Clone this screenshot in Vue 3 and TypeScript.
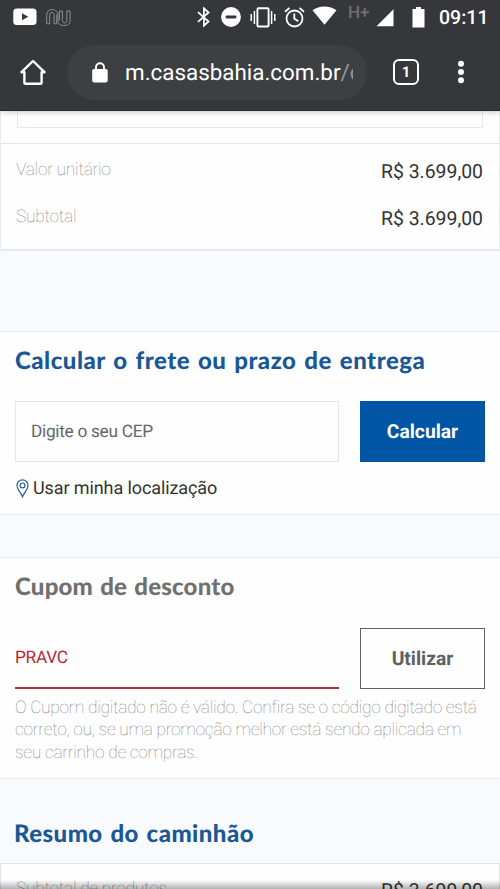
<script setup lang="ts">
interface PriceRow {
  label: string
  value: string
}

const itemRows: PriceRow[] = [
  { label: 'Valor unitário', value: 'R$ 3.699,00' },
  { label: 'Subtotal', value: 'R$ 3.699,00' },
]
const couponCode = 'PRAVC'
</script>

<template>
  <div class="screen">
    <header class="chrome">
      <div class="status">
        <svg class="i-youtube" width="24" height="18" viewBox="0 0 24 18"><rect x=".3" y=".5" width="23.2" height="16.5" rx="3.5" fill="#fff" /><path d="M9 5.2v7L15.3 8.7z" fill="#36373b" /></svg>
        <svg class="i-nu" width="25" height="17" viewBox="0 0 25 17" fill="none" stroke="#a2a3a6" stroke-width=".8"><path d="M.7 14.8V6.2C.7 2.5 2.8.6 6 .6c3.8 0 6 2 6 5.6v5.3c0 3.2 1.8 5 5.5 5 4.6 0 6.6-1.6 6.6-5.5V2h-3.3v9.3c0 1.7-.8 2.5-2.2 2.5s-2.2-.8-2.2-2.5V2h-3v9.3M.7 14.8h3V5.8c0-1.5.8-2.3 2.2-2.3s2.2.8 2.2 2.3v9h2.6V5.5" /></svg>
        <svg class="i-bt" width="14" height="20" viewBox="0 0 14 20" fill="none" stroke="#fff" stroke-width="1.8"><path d="M1 5.2l10.5 9.3-4.6 4.2V1.3l4.6 4.2L1 14.8" /></svg>
        <svg class="i-dnd" width="20" height="20" viewBox="0 0 20 20"><circle cx="10" cy="10" r="9.9" fill="#fff" /><rect x="4.7" y="8.5" width="10.6" height="3" rx=".8" fill="#36373b" /></svg>
        <svg class="i-vib" width="26" height="21" viewBox="0 0 26 21" fill="none" stroke="#fff"><rect x="7.4" y="1.3" width="11.2" height="18.2" rx="1" stroke-width="1.9" /><path d="M4.4 4v13M21.6 4v13M1.2 7v7M24.8 7v7" stroke-width="1.5" /></svg>
        <svg class="i-alarm" width="21" height="21" viewBox="0 0 21 21" fill="none" stroke="#fff" stroke-width="1.8"><circle cx="10.5" cy="11.5" r="8" /><path d="M1 4.7L5.4 1M20 4.7L15.6 1M10.3 6.5v5.3l4 2.5" /></svg>
        <svg class="i-wifi" width="25" height="19" viewBox="0 0 25 19"><path d="M.5 4.2C7-.9 18-.9 24.5 4.2L12.5 18.8z" fill="#fff" /></svg>
        <span class="network">H+</span>
        <svg class="i-signal" width="18" height="18" viewBox="0 0 18 18"><path d="M17.5.3v17H.5z" fill="#fff" /></svg>
        <svg class="i-battery" width="13" height="21" viewBox="0 0 13 21"><path d="M4 0h5v2h3.5v18.5H.5V2H4z" fill="#fff" /></svg>
        <span class="clock">09:11</span>
      </div>
      <div class="toolbar">
        <svg class="i-home" width="26" height="27" viewBox="0 0 26 27" fill="none" stroke="#fff" stroke-width="2.4" stroke-linejoin="round"><path d="M1.5 13.2L13 2l11.5 11.2h-2.9v10.6q0 1-1 1H5.4q-1 0-1-1V13.2z" /></svg>
        <div class="address">
          <svg class="i-lock" width="16" height="21" viewBox="0 0 16 21"><rect x=".2" y="7" width="15.5" height="13.4" rx="1.8" fill="#fff" /><path d="M4 8V5.2a4 4 0 0 1 8 0V8" fill="none" stroke="#fff" stroke-width="1.9" /></svg>
          <div class="url">m.casasbahia.com.br<span class="path">/c</span></div>
        </div>
        <div class="tabs">1</div>
        <svg class="i-more" width="8" height="24" viewBox="0 0 8 24" fill="#fff"><circle cx="4" cy="3.7" r="3" /><circle cx="4" cy="12" r="3" /><circle cx="4" cy="20.3" r="3" /></svg>
      </div>
    </header>

    <main>
      <section class="item-card">
        <div class="item-top"><div class="item-box"></div></div>
        <div v-for="row in itemRows" :key="row.label" class="row">
          <span class="label">{{ row.label }}</span>
          <span class="price">{{ row.value }}</span>
        </div>
      </section>

      <section class="panel shipping">
        <h2 class="t-shipping">Calcular o frete ou prazo de entrega</h2>
        <div class="form">
          <div class="field">Digite o seu CEP</div>
          <button class="btn primary" type="button">Calcular</button>
        </div>
        <div class="locate">
          <svg width="13" height="19" viewBox="0 0 13 19" fill="none" stroke="#2460a0" stroke-width="1.2"><path d="M6.5 17.7C4.8 13.8 1 10 1 6.4a5.5 5.5 0 0 1 11 0c0 3.6-3.8 7.4-5.5 11.3z" /><circle cx="6.5" cy="6.4" r="2.4" /></svg>
          <span>Usar minha localização</span>
        </div>
      </section>

      <section class="panel coupon">
        <h2 class="t-coupon">Cupom de desconto</h2>
        <div class="form">
          <div class="field error">{{ couponCode }}</div>
          <button class="btn outline" type="button">Utilizar</button>
        </div>
        <p class="message">
          O Cupom digitado não é válido. Confira se o código digitado está<br />
          correto, ou, se uma promoção melhor está sendo aplicada em<br />
          seu carrinho de compras.
        </p>
      </section>

      <h2 class="t-summary">Resumo do caminhão</h2>
      <section class="summary">
        <div class="row">
          <span class="label">Subtotal de produtos</span>
          <span class="price">R$ 3.699,00</span>
        </div>
      </section>
    </main>
    <div class="bottom-shade"></div>
  </div>
</template>

<style>
body {
  margin: 0;
  overflow: hidden;
}
</style>

<style scoped>
* {
  box-sizing: border-box;
}
.screen {
  position: relative;
  width: 500px;
  height: 889px;
  overflow: hidden;
  display: flex;
  flex-direction: column;
  background: #f8fafd;
  color: #333;
  font-family: Roboto, "Liberation Sans", sans-serif;
  text-rendering: geometricPrecision;
}
svg {
  display: block;
  flex: none;
}
.chrome {
  position: relative;
  flex: none;
  height: 111px;
  background: #36373b;
  border-bottom: 1px solid #29292d;
  box-shadow: 0 1px 6px rgba(0, 0, 0, 0.22);
  color: #fff;
}
.status {
  display: flex;
  height: 34px;
  padding-left: 13px;
  align-items: center;
}
.i-nu { margin-left: 9px; }
.i-bt { margin-left: 126px; }
.i-dnd { margin-left: 10px; }
.i-vib { margin-left: 9px; }
.i-alarm { margin-left: 8px; }
.i-wifi { margin-left: 7px; margin-top: -3px; }
.network {
  width: 22px;
  margin-left: 11px;
  margin-top: -9px;
  color: #6f7074;
  font-size: 17px;
  font-weight: 500;
  line-height: 20px;
}
.i-signal { margin-left: 6px; margin-top: 2px; }
.i-battery { margin-left: 18px; }
.clock {
  margin-left: 14px;
  padding-top: 1px;
  font-size: 19.5px;
  font-weight: 500;
  line-height: 24px;
}
.toolbar {
  display: flex;
  align-items: center;
  height: 76px;
  padding-left: 20px;
}
.address {
  display: flex;
  align-items: center;
  width: 300px;
  height: 55px;
  margin-left: 21px;
  padding-left: 25px;
  border-radius: 28px;
  background: #3d4043;
}
.url {
  width: 228px;
  margin-left: 17px;
  padding-top: 2px;
  overflow: hidden;
  white-space: nowrap;
  font-size: 22.4px;
  line-height: 30px;
}
.path { color: #94979a; }
.tabs {
  width: 26px;
  height: 26px;
  margin-left: 26px;
  border: 2.5px solid #fff;
  border-radius: 6px;
  font-size: 15px;
  font-weight: 700;
  line-height: 22px;
  text-align: center;
}
.i-more { margin-left: 38px; }
main {
  display: flex;
  flex-direction: column;
}
.item-card {
  height: 140px;
  background: #fefefe;
  border: solid #e5eaef;
  border-width: 0 1px 2px;
}
.item-top {
  height: 33px;
  padding: 0 16px;
  border-bottom: 1px solid #dfe5ea;
  margin-bottom: 4px;
}
.item-box {
  height: 17px;
  border: 1px solid #e3e9ee;
  border-top: 0;
}
.row {
  display: flex;
  justify-content: space-between;
  height: 47px;
  padding: 0 16px 0 15px;
}
.label {
  color: #808080;
  font-size: 17.4px;
  font-weight: 100;
  line-height: 45px;
  letter-spacing: -0.28px;
}
.price {
  color: #333;
  font-size: 19.4px;
  line-height: 47px;
}
.panel {
  padding: 0 15px;
  background: #fefefe;
  border: solid #e4eaef;
  border-width: 1px 0;
}
.shipping {
  height: 184px;
  margin-top: 80px;
}
.coupon {
  height: 222px;
  margin-top: 42px;
}
h2 {
  margin: 0;
  color: #1a5795;
  font-family: Lato, "Open Sans", sans-serif;
  font-size: 24px;
  font-weight: 900;
  line-height: 30px;
  white-space: nowrap;
}
.t-shipping { padding-top: 14px; letter-spacing: 0.5px; word-spacing: 1.7px; }
.t-coupon { padding-top: 14px; color: #707070; letter-spacing: 0.2px; word-spacing: 1.2px; }
.t-summary { margin: 40px 0 14px 14px; letter-spacing: 0.45px; word-spacing: 1.6px; }
.form {
  display: flex;
  justify-content: space-between;
  margin-top: 26px;
}
.field {
  width: 324px;
  height: 61px;
  padding-left: 15px;
  border: 1px solid #e1e7ec;
  color: #666;
  font-size: 17.3px;
  line-height: 61px;
  letter-spacing: -0.3px;
}
.shipping .form { margin-top: 25px; }
.field.error {
  padding: 0;
  border: 0;
  border-bottom: 2px solid #b72a39;
  color: #b72a39;
  font-size: 17.3px;
  line-height: 61px;
}
.btn {
  width: 125px;
  height: 61px;
  padding: 0;
  border: 0;
  border-radius: 0;
  font-family: inherit;
  font-size: 19.3px;
  font-weight: 700;
  text-rendering: geometricPrecision;
}
.primary { background: #0055a4; color: #fff; }
.outline { background: #fefefe; border: 1px solid #606060; color: #606060; }
.locate {
  display: flex;
  align-items: center;
  gap: 4px;
  height: 24px;
  margin-top: 14px;
  padding-left: 1px;
  font-size: 18px;
  letter-spacing: -0.1px;
}
.message {
  margin: 8px 0 0;
  color: #808080;
  font-size: 17.4px;
  font-weight: 100;
  line-height: 22.3px;
  letter-spacing: -0.3px;
  white-space: nowrap;
}
.summary {
  height: 60px;
  background: #fefefe;
  border: 1px solid #e0e6eb;
}
.summary .row { padding-top: 3px; }
.bottom-shade {
  position: absolute;
  left: 0;
  right: 0;
  bottom: 0;
  height: 9px;
  background: linear-gradient(rgba(0, 0, 0, 0), rgba(0, 0, 0, 0.3));
}
</style>
